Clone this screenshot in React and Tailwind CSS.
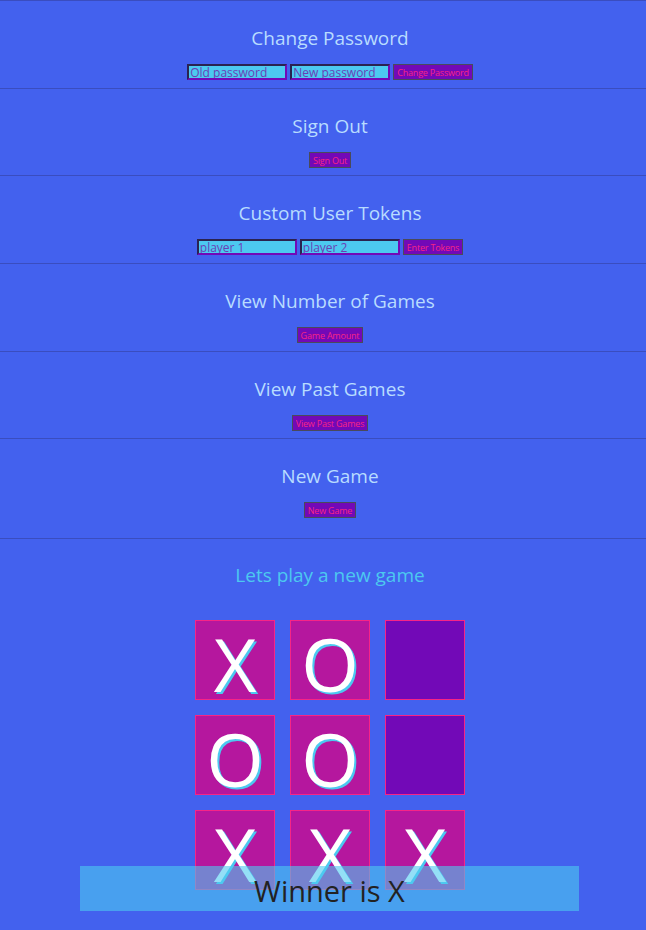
import React from 'react';

const font = { fontFamily: '"Open Sans", "Noto Sans", sans-serif' };

const Btn = ({ children }) => (
    <button className="h-[16px] px-[3px] bg-[#7209b7] text-[#f72585] text-[9px] leading-none tracking-[-0.2px] border border-[#4a4a5a]">
        {children}
    </button>
);

const Field = ({ placeholder }) => (
    <input
        type="text"
        placeholder={placeholder}
        className="w-[100px] h-[16px] px-[1px] bg-[#4cc9f0] text-[12px] leading-none text-[#7209b7] placeholder:text-[#6b3fb5] border-2 border-t-[#2a2350] border-l-[#2a2350] border-r-[#7209b7] border-b-[#7209b7] outline-none"
    />
);

const Section = ({ title, h, children }) => (
    <div className={`${h} border-t border-[#3a4dbf] pl-[14px] flex flex-col items-center`}>
        <h2 className="mt-[23px] h-[28px] text-[19px] leading-[28px] text-[#b8dcff]">{title}</h2>
        <div className="mt-[12px] flex gap-[3px]">{children}</div>
    </div>
);

const Cell = ({ v }) => (
    <div className={`w-[80px] h-[80px] border border-[#f72585] flex items-center justify-center ${v ? 'bg-[#b5179e]' : 'bg-[#7209b7]'}`}>
        {v && (
            <span className="text-[74px] leading-none text-white mt-[8px] [text-shadow:2px_2px_0_#4cc9f0]">{v}</span>
        )}
    </div>
);

export default function App() {
    const board = ['X', 'O', '', 'O', 'O', '', 'X', 'X', 'X'];
    return (
        <div className="relative min-h-[930px] bg-[#4361ee]" style={font}>
            <Section title="Change Password" h="h-[88px]">
                <Field placeholder="Old password" />
                <Field placeholder="New password" />
                <Btn>Change Password</Btn>
            </Section>
            <Section title="Sign Out" h="h-[87px]">
                <Btn>Sign Out</Btn>
            </Section>
            <Section title="Custom User Tokens" h="h-[88px]">
                <Field placeholder="player 1" />
                <Field placeholder="player 2" />
                <Btn>Enter Tokens</Btn>
            </Section>
            <Section title="View Number of Games" h="h-[88px]">
                <Btn>Game Amount</Btn>
            </Section>
            <Section title="View Past Games" h="h-[87px]">
                <Btn>View Past Games</Btn>
            </Section>
            <Section title="New Game" h="h-[100px]">
                <Btn>New Game</Btn>
            </Section>

            <div className="border-t border-[#3a4dbf] pl-[14px] flex flex-col items-center">
                <p className="mt-[22px] h-[28px] text-[19px] leading-[28px] text-[#4cc9f0]">Lets play a new game</p>
                <div className="mt-[31px] grid grid-cols-3 gap-[15px]">
                    {board.map((v, i) => (
                        <Cell key={i} v={v} />
                    ))}
                </div>
            </div>

            <div className="absolute left-[80px] top-[866px] w-[499px] h-[45px] bg-[#4cc9f0]/60 flex items-center justify-center">
                <span className="text-[29px] leading-none text-[#222] mt-[4px]">Winner is X</span>
            </div>
        </div>
    );
}
